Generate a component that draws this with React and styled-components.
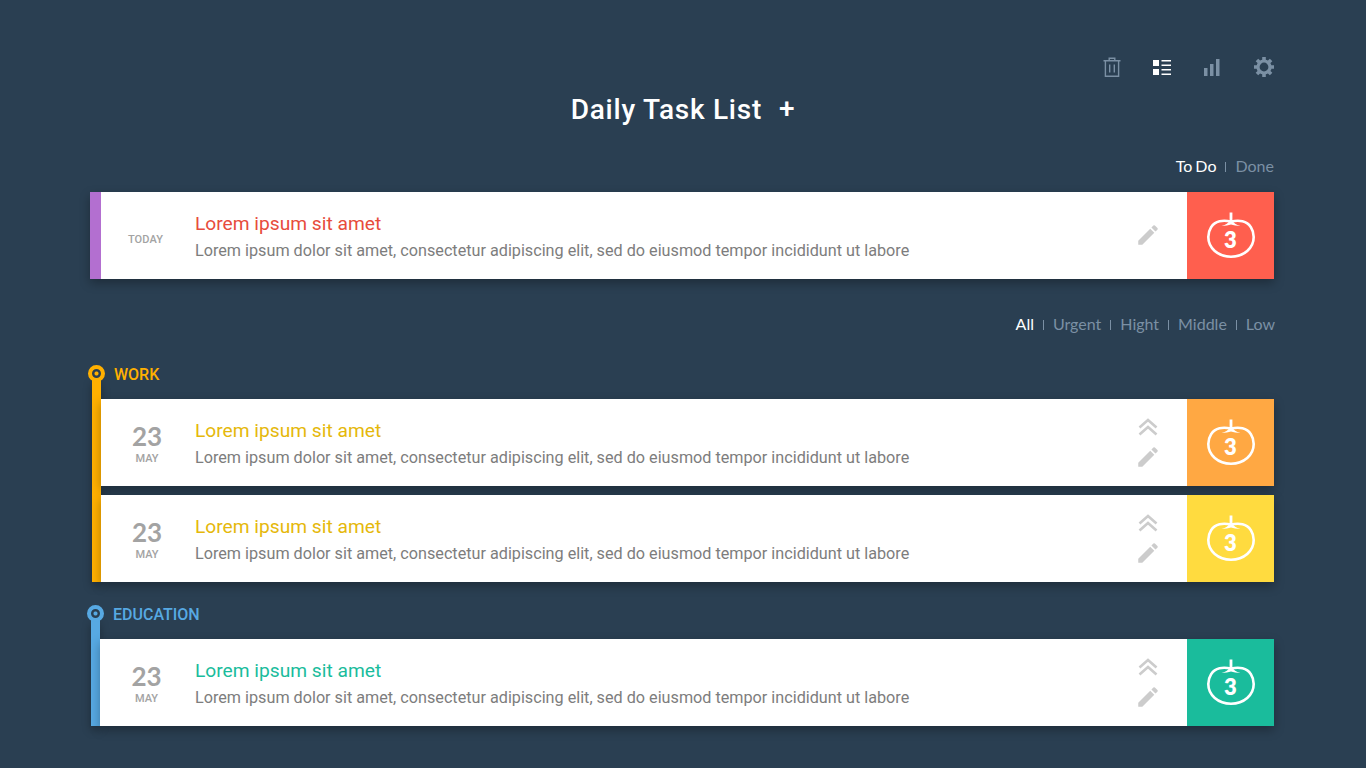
import React from "react";
import styled, { createGlobalStyle } from "styled-components";
import { MdEdit } from "react-icons/md";

const GlobalStyle = createGlobalStyle`
  html, body {
    margin: 0;
    background: #2a3f52;
    font-family: Roboto, "Liberation Sans", sans-serif;
  }
`;

const Page = styled.div`
  width: 1366px;
  height: 768px;
  box-sizing: border-box;
  padding: 55px 92px 0 90px;
  overflow: hidden;
  background: #2a3f52;
`;

const Toolbar = styled.div`
  display: flex;
  justify-content: flex-end;
  align-items: center;
  gap: 32px;
  height: 24px;
`;

const ToolIcon = styled.svg`
  display: block;
  color: ${(p) => (p.$active ? "#ffffff" : "#7b90a4")};
`;

const BarsIcon = styled(ToolIcon)`
  margin: 0 2px 0 1px;
`;

const Title = styled.h1`
  display: flex;
  justify-content: center;
  align-items: center;
  gap: 17px;
  height: 40px;
  margin: 10px 0 0 2px;
  font-size: 28px;
  font-weight: 500;
  letter-spacing: 0.75px;
  color: #ffffff;
`;

const AddSign = styled.span`
  font-size: 28px;
  font-weight: 500;
  line-height: 40px;
`;

const Tabs = styled.nav`
  display: flex;
  justify-content: flex-end;
  align-items: center;
  height: 20px;
  margin-top: ${(p) => p.$top}px;
  margin-right: ${(p) => p.$right || 0}px;
  font-family: Lato, sans-serif;
  font-size: 16px;
`;

const Tab = styled.span`
  color: ${(p) => (p.$active ? "#ffffff" : "#7b90a4")};
  word-spacing: -1px;
  &:not(:first-child)::before {
    content: "";
    display: inline-block;
    width: 1px;
    height: 10px;
    margin: 0 9px;
    background: #7b90a4;
  }
`;

const Card = styled.article`
  display: flex;
  height: 87px;
  background: #ffffff;
  box-shadow: 0 4px 10px rgba(0, 0, 0, 0.3);
  & + & {
    margin-top: 9px;
  }
`;

const TodayCard = styled(Card)`
  margin-top: 17px;
  border-left: 11px solid #b36fd0;
`;

const DateCol = styled.div`
  flex: none;
  width: ${(p) => p.$width}px;
  display: flex;
  flex-direction: column;
  align-items: center;
  justify-content: center;
  color: #a3a3a3;
`;

const Day = styled.span`
  font-family: Lato, sans-serif;
  font-size: 26px;
  font-weight: 700;
  line-height: 28px;
  margin-top: 3px;
`;

const Month = styled.span`
  font-size: 11px;
  font-weight: 500;
  line-height: 14px;
  margin-top: 2px;
`;

const Today = styled.span`
  font-size: 11px;
  font-weight: 500;
  letter-spacing: 0.1px;
  margin: 7px 3px 0 0;
`;

const Body = styled.div`
  flex: 1;
  display: flex;
  flex-direction: column;
  justify-content: center;
  padding: 4px 0 0 2px;
`;

const TaskTitle = styled.div`
  margin: -1px 0 1px;
  font-size: 19.2px;
  line-height: 26px;
  color: ${(p) => p.$color};
`;

const TaskText = styled.div`
  font-size: 16.2px;
  line-height: 26px;
  color: #7d7d7d;
`;

const Actions = styled.div`
  flex: none;
  width: 78px;
  display: flex;
  flex-direction: column;
  align-items: center;
  justify-content: center;
  gap: 8px;
  padding-bottom: 1px;
  color: #cccccc;
`;

const ChevronIcon = styled.svg`
  display: block;
  margin-top: 4px;
`;

const Pomodoro = styled.div`
  flex: none;
  width: 87px;
  display: flex;
  align-items: center;
  justify-content: center;
  background: ${(p) => p.$color};
`;

const Tomato = styled.div`
  position: relative;
  width: 50px;
  height: 47px;
  margin-top: -1px;
`;

const TomatoCount = styled.span`
  position: absolute;
  left: 0;
  right: 0;
  top: 14px;
  text-align: center;
  font-family: Lato, sans-serif;
  font-size: 22px;
  font-weight: 800;
  line-height: 28px;
  color: #ffffff;
`;

const Group = styled.section`
  display: grid;
  grid-template-columns: 9px 1fr;
  margin-top: ${(p) => p.$top}px;
  margin-left: ${(p) => p.$left}px;
`;

const Rail = styled.div`
  display: flex;
  flex-direction: column;
  align-items: center;
  color: ${(p) => p.$color};
`;

const RailDot = styled.span`
  flex: none;
  box-sizing: border-box;
  width: 17px;
  height: 17px;
  margin: 0 -4px;
  border-radius: 50%;
  border: 4px solid currentColor;
  background: radial-gradient(circle, currentColor 0 1.5px, #2a3f52 2.5px);
  position: relative;
  z-index: 1;
`;

const RailLine = styled.span`
  flex: 1;
  width: 9px;
  margin-top: -2px;
  background: currentColor;
  box-shadow: 0 4px 10px rgba(0, 0, 0, 0.3);
`;

const GroupHead = styled.h2`
  height: 33px;
  margin: 0;
  padding: 1px 0 0 13px;
  font-size: 16px;
  font-weight: 500;
  line-height: 18px;
  color: ${(p) => p.$color};
`;

function Trash() {
  return (
    <ToolIcon width="18" height="20" viewBox="0 0 18 20" fill="none" stroke="currentColor" strokeWidth="1.4">
      <path d="M0.5 3.7H17.5M6.2 3.5V1.2H11.8V3.5M2.4 4V19.2H15.6V4M6.7 7.5V15.5M11.3 7.5V15.5" />
    </ToolIcon>
  );
}

function ListView() {
  return (
    <ToolIcon $active width="18" height="15" viewBox="0 0 18 15" fill="currentColor">
      <path d="M0 0H6V6H0ZM0 9H6V15H0ZM8.5 0H18V1.5H8.5ZM8.5 4.5H18V6H8.5ZM8.5 9H18V10.5H8.5ZM8.5 13.5H18V15H8.5Z" />
    </ToolIcon>
  );
}

function Bars() {
  return (
    <BarsIcon width="16" height="17" viewBox="0 0 16 17" fill="currentColor">
      <path d="M0 9H3.5V17H0ZM6 5H9.5V17H6ZM12 0H15.5V17H12Z" />
    </BarsIcon>
  );
}

const gearTeeth = [0, 45, 90, 135];

function Gear() {
  return (
    <ToolIcon width="20" height="20" viewBox="0 0 20 20" fill="currentColor">
      <circle cx="10" cy="10" r="6" fill="none" stroke="currentColor" strokeWidth="3.2" />
      {gearTeeth.map((angle) => (
        <path key={angle} d="M8.2 0H11.8V3.4H8.2ZM8.2 16.6H11.8V20H8.2Z" transform={`rotate(${angle} 10 10)`} />
      ))}
    </ToolIcon>
  );
}

function Chevrons() {
  return (
    <ChevronIcon width="20" height="18" viewBox="0 0 20 18" fill="none" stroke="currentColor" strokeWidth="2.6">
      <path d="M1.5 9.5L10 2L18.5 9.5M1.5 16.5L10 9L18.5 16.5" />
    </ChevronIcon>
  );
}

function TomatoMark({ count }) {
  return (
    <Tomato>
      <svg width="50" height="47" viewBox="0 0 50 47" fill="none" stroke="#fff" strokeWidth="2.6" style={{ display: "block" }}>
        <path d="M25 9.6C21 8.7 17 8.5 13.5 9.3C6 11 2.3 18 2.3 25C2.3 36 12 44.7 25 44.7C38 44.7 47.7 36 47.7 25C47.7 18 44 11 36.5 9.3C33 8.5 29 8.7 25 9.6Z" />
        <path d="M25 0.5V10" strokeWidth="2.8" />
        <path d="M15.5 14C20 12.6 22.5 11.2 23.5 8.5H26.5C27.5 11.2 30 12.6 34.5 14C30.5 13.6 27.5 13 25 12.4C22.5 13 19.5 13.6 15.5 14Z" fill="#fff" stroke="none" />
      </svg>
      <TomatoCount>{count}</TomatoCount>
    </Tomato>
  );
}

function TaskCard({ as: Wrapper = Card, date, dateWidth = 92, titleColor, blockColor, chevrons = true }) {
  return (
    <Wrapper>
      <DateCol $width={dateWidth}>
        {date ? (
          <>
            <Day>{date[0]}</Day>
            <Month>{date[1]}</Month>
          </>
        ) : (
          <Today>TODAY</Today>
        )}
      </DateCol>
      <Body>
        <TaskTitle $color={titleColor}>Lorem ipsum sit amet</TaskTitle>
        <TaskText>Lorem ipsum dolor sit amet, consectetur adipiscing elit, sed do eiusmod tempor incididunt ut labore</TaskText>
      </Body>
      <Actions>
        {chevrons && <Chevrons />}
        <MdEdit size={26} style={{ display: "block" }} />
      </Actions>
      <Pomodoro $color={blockColor}>
        <TomatoMark count={3} />
      </Pomodoro>
    </Wrapper>
  );
}

function TaskGroup({ name, color, top, left, children }) {
  return (
    <Group $top={top} $left={left}>
      <Rail $color={color}>
        <RailDot />
        <RailLine />
      </Rail>
      <div>
        <GroupHead $color={color}>{name}</GroupHead>
        {children}
      </div>
    </Group>
  );
}

export default function App() {
  return (
    <Page>
      <GlobalStyle />
      <Toolbar>
        <Trash />
        <ListView />
        <Bars />
        <Gear />
      </Toolbar>
      <Title>
        <span>Daily Task List</span>
        <AddSign>+</AddSign>
      </Title>
      <Tabs $top={26}>
        <Tab $active>To Do</Tab>
        <Tab>Done</Tab>
      </Tabs>
      <TaskCard as={TodayCard} titleColor="#e74c3c" blockColor="#ff5f4e" chevrons={false} />
      <Tabs $top={34} $right={-1}>
        <Tab $active>All</Tab>
        <Tab>Urgent</Tab>
        <Tab>Hight</Tab>
        <Tab>Middle</Tab>
        <Tab>Low</Tab>
      </Tabs>
      <TaskGroup name="WORK" color="#ffb000" top={32} left={2}>
        <TaskCard date={["23", "MAY"]} titleColor="#e5b80b" blockColor="#ffa843" />
        <TaskCard date={["23", "MAY"]} titleColor="#e5b80b" blockColor="#ffdb3f" />
      </TaskGroup>
      <TaskGroup name="EDUCATION" color="#57a9e3" top={23} left={1}>
        <TaskCard date={["23", "MAY"]} dateWidth={93} titleColor="#1abc9c" blockColor="#1abc9c" />
      </TaskGroup>
    </Page>
  );
}
